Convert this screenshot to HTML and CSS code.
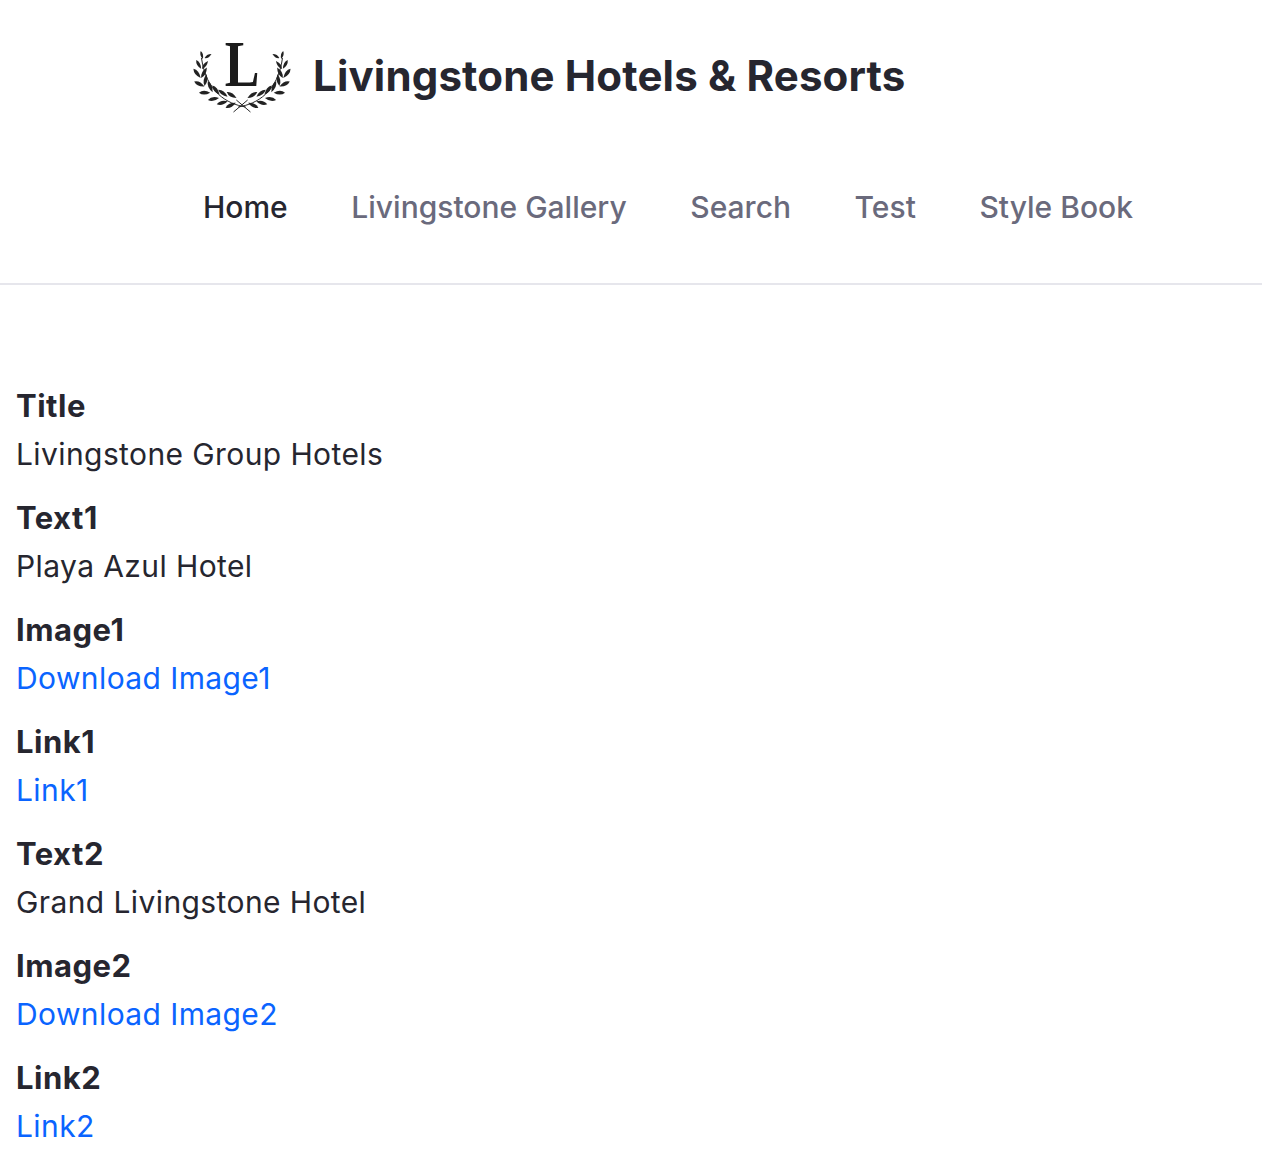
FILE: index.html
```html
<!DOCTYPE html>
<html lang="en">
<head>
<meta charset="utf-8">
<title>Livingstone Hotels &amp; Resorts</title>
<link rel="stylesheet" href="styles.css">
</head>
<body>
<header class="site-header">
  <div class="brand">
    <div class="logo">
      <svg class="wreath" viewBox="0 0 104 80" width="104" height="80" aria-hidden="true">
        <defs>
          <path id="leaf" d="M-6 0Q-1-3.8 6 0Q-1 3.8-6 0z"/>
          <g id="branch">
            <path class="stem" d="M43 74L58 62M56 69C36 66 14 54 9 20"/>
            <g class="leaves">
              <use href="#leaf" transform="translate(9.3 17) rotate(75) scale(.7)"/>
              <use href="#leaf" transform="translate(16 18) rotate(-30) scale(.7)"/>
              <use href="#leaf" transform="translate(6 26.3) rotate(60) scale(.85)"/>
              <use href="#leaf" transform="translate(12.7 27) rotate(-50) scale(.85)"/>
              <use href="#leaf" transform="translate(4.3 35.3) rotate(50)"/>
              <use href="#leaf" transform="translate(11.7 34.7) rotate(-60)"/>
              <use href="#leaf" transform="translate(6.7 46) rotate(25)"/>
              <use href="#leaf" transform="translate(13.3 42) rotate(-80)"/>
              <use href="#leaf" transform="translate(12.3 54.7) rotate(0)"/>
              <use href="#leaf" transform="translate(18.3 48.7) rotate(65)"/>
              <use href="#leaf" transform="translate(21.7 61) rotate(-10)"/>
              <use href="#leaf" transform="translate(24.3 52) rotate(50)"/>
              <use href="#leaf" transform="translate(31 64.7) rotate(-15)"/>
              <use href="#leaf" transform="translate(31.7 55.3) rotate(35)"/>
              <use href="#leaf" transform="translate(40 67.3) rotate(-25)"/>
              <use href="#leaf" transform="translate(41 57) rotate(30)"/>
            </g>
          </g>
        </defs>
        <g transform="translate(3 0) scale(.942 1)">
          <use href="#branch"/>
          <use href="#branch" transform="matrix(-1 0 0 1 104 0)"/>
        </g>
      </svg>
      <span class="logo-letter">L</span>
    </div>
    <span class="brand-name">Livingstone Hotels &amp; Resorts</span>
  </div>
  <nav class="nav">
    <a class="nav-link is-current" href="#">Home</a>
    <a class="nav-link" href="#">Livingstone Gallery</a>
    <a class="nav-link" href="#">Search</a>
    <a class="nav-link" href="#">Test</a>
    <a class="nav-link" href="#">Style Book</a>
  </nav>
</header>
<main class="content">
  <div class="field"><div class="label">Title</div><div>Livingstone Group Hotels</div></div>
  <div class="field"><div class="label">Text1</div><div>Playa Azul Hotel</div></div>
  <div class="field"><div class="label">Image1</div><a href="#">Download Image1</a></div>
  <div class="field"><div class="label">Link1</div><a href="#">Link1</a></div>
  <div class="field"><div class="label">Text2</div><div>Grand Livingstone Hotel</div></div>
  <div class="field"><div class="label">Image2</div><a href="#">Download Image2</a></div>
  <div class="field"><div class="label">Link2</div><a href="#">Link2</a></div>
</main>
</body>
</html>
```
FILE: styles.css
```css
* { box-sizing: border-box; }
html, body { margin: 0; height: 1160px; overflow: hidden; }
body {
  background: #fff;
  color: #26262f;
  font-family: Inter, "Liberation Sans", sans-serif;
  font-size: 30px;
  line-height: 48px;
  letter-spacing: 0.4px;
}
.site-header {
  height: 285px;
  border-bottom: 2px solid #e6e6ec;
  padding-left: 190px;
}
.brand {
  display: flex;
  align-items: center;
  gap: 20px;
  padding-top: 38px;
  height: 114px;
}
.logo {
  position: relative;
  flex: none;
  width: 104px;
  height: 76px;
}
.wreath { display: block; }
.logo-letter {
  position: absolute;
  left: 0;
  right: 0;
  top: -10px;
  font-family: "Liberation Serif", serif;
  font-size: 65px;
  font-weight: 700;
  line-height: 72px;
  letter-spacing: 0;
  text-align: center;
  color: #1c1c1c;
  transform: scaleX(.8);
}
.stem { fill: none; stroke: #222; stroke-width: 1; }
.leaves { fill: #222; }
.brand-name {
  font-size: 42px;
  font-weight: 700;
  line-height: 52px;
  letter-spacing: 0.17px;
  margin-left: -1px;
}
.nav {
  display: flex;
  gap: 63.6px;
  padding: 69px 0 0 13px;
  letter-spacing: 0;
}
.nav-link {
  color: #6a6a7c;
  font-size: 30px;
  font-weight: 500;
  text-decoration: none;
  letter-spacing: 0;
}
.nav-link.is-current { color: #26262f; }
.content {
  display: flex;
  flex-direction: column;
  gap: 16px;
  padding: 97px 16px 0;
}
.field { display: flex; flex-direction: column; align-items: flex-start; }
.label { font-size: 31px; font-weight: 700; letter-spacing: 0.5px; }
a { color: #0a64ff; text-decoration: none; }
```
